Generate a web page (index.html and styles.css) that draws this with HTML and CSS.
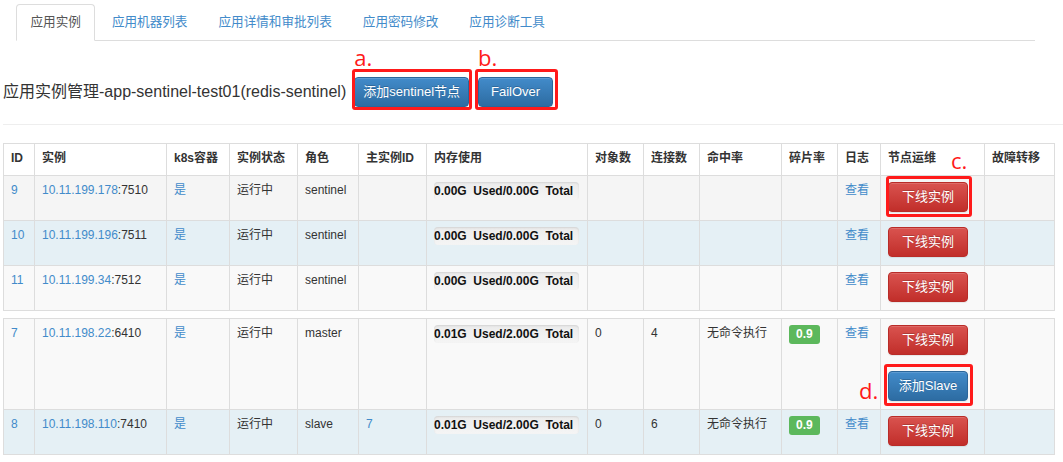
FILE: index.html
```html
<!DOCTYPE html>
<html lang="zh-CN">
<head>
<meta charset="utf-8">
<title>应用实例</title>
<link rel="stylesheet" href="styles.css">
</head>
<body>
<ul class="tabs">
  <li><a class="tab active">应用实例</a></li>
  <li><a class="tab">应用机器列表</a></li>
  <li><a class="tab">应用详情和审批列表</a></li>
  <li><a class="tab">应用密码修改</a></li>
  <li><a class="tab">应用诊断工具</a></li>
</ul>

<div class="page-head">
  <h3 class="title">应用实例管理-app-sentinel-test01(redis-sentinel)</h3>
  <span class="annot">
    <button class="btn btn-primary btn-sentinel">添加sentinel节点</button>
    <span class="mark-box box-a"></span>
    <span class="mark-label label-a">a.</span>
  </span>
  <span class="annot annot-b">
    <button class="btn btn-primary btn-failover">FailOver</button>
    <span class="mark-box box-b"></span>
    <span class="mark-label label-b">b.</span>
  </span>
</div>

<table class="grid">
  <colgroup>
    <col class="c-id"><col class="c-inst"><col class="c-k8s"><col class="c-state"><col class="c-role"><col class="c-master"><col class="c-mem"><col class="c-obj"><col class="c-conn"><col class="c-hit"><col class="c-frag"><col class="c-log"><col class="c-ops"><col class="c-fail">
  </colgroup>
  <thead>
    <tr>
      <th>ID</th><th>实例</th><th>k8s容器</th><th>实例状态</th><th>角色</th><th>主实例ID</th><th>内存使用</th><th>对象数</th><th>连接数</th><th>命中率</th><th>碎片率</th><th>日志</th><th>节点运维</th><th>故障转移</th>
    </tr>
  </thead>
  <tbody>
    <tr class="row-hover">
      <td><a>9</a></td>
      <td><a>10.11.199.178</a>:7510</td>
      <td><a>是</a></td>
      <td>运行中</td>
      <td>sentinel</td>
      <td></td>
      <td><span class="mem">0.00G&nbsp; Used/0.00G&nbsp; Total</span></td>
      <td></td><td></td><td></td><td></td>
      <td><a>查看</a></td>
      <td>
        <span class="annot">
          <button class="btn btn-danger btn-cell">下线实例</button>
          <span class="mark-box box-c"></span>
          <span class="mark-label label-c">c.</span>
        </span>
      </td>
      <td></td>
    </tr>
    <tr class="row-info">
      <td><a>10</a></td>
      <td><a>10.11.199.196</a>:7511</td>
      <td><a>是</a></td>
      <td>运行中</td>
      <td>sentinel</td>
      <td></td>
      <td><span class="mem">0.00G&nbsp; Used/0.00G&nbsp; Total</span></td>
      <td></td><td></td><td></td><td></td>
      <td><a>查看</a></td>
      <td><button class="btn btn-danger btn-cell">下线实例</button></td>
      <td></td>
    </tr>
    <tr class="row-plain">
      <td><a>11</a></td>
      <td><a>10.11.199.34</a>:7512</td>
      <td><a>是</a></td>
      <td>运行中</td>
      <td>sentinel</td>
      <td></td>
      <td><span class="mem">0.00G&nbsp; Used/0.00G&nbsp; Total</span></td>
      <td></td><td></td><td></td><td></td>
      <td><a>查看</a></td>
      <td><button class="btn btn-danger btn-cell">下线实例</button></td>
      <td></td>
    </tr>
  </tbody>
</table>

<table class="grid grid-second">
  <colgroup>
    <col class="c-id"><col class="c-inst"><col class="c-k8s"><col class="c-state"><col class="c-role"><col class="c-master"><col class="c-mem"><col class="c-obj"><col class="c-conn"><col class="c-hit"><col class="c-frag"><col class="c-log"><col class="c-ops"><col class="c-fail">
  </colgroup>
  <tbody>
    <tr class="row-plain">
      <td><a>7</a></td>
      <td><a>10.11.198.22</a>:6410</td>
      <td><a>是</a></td>
      <td>运行中</td>
      <td>master</td>
      <td></td>
      <td><span class="mem">0.01G&nbsp; Used/2.00G&nbsp; Total</span></td>
      <td>0</td>
      <td>4</td>
      <td>无命令执行</td>
      <td><span class="label-ok">0.9</span></td>
      <td><a>查看</a></td>
      <td>
        <div class="btn-stack">
          <button class="btn btn-danger btn-cell">下线实例</button>
          <span class="annot">
            <button class="btn btn-primary btn-cell">添加Slave</button>
            <span class="mark-box box-d"></span>
            <span class="mark-label label-d">d.</span>
          </span>
        </div>
      </td>
      <td></td>
    </tr>
    <tr class="row-info">
      <td><a>8</a></td>
      <td><a>10.11.198.110</a>:7410</td>
      <td><a>是</a></td>
      <td>运行中</td>
      <td>slave</td>
      <td><a>7</a></td>
      <td><span class="mem">0.01G&nbsp; Used/2.00G&nbsp; Total</span></td>
      <td>0</td>
      <td>6</td>
      <td>无命令执行</td>
      <td><span class="label-ok">0.9</span></td>
      <td><a>查看</a></td>
      <td><button class="btn btn-danger btn-cell">下线实例</button></td>
      <td></td>
    </tr>
  </tbody>
</table>
</body>
</html>
```

FILE: styles.css
```css
* { box-sizing: border-box; }

body {
  margin: 0;
  background: #fff;
  color: #333;
  font-family: "Liberation Sans", Arial, "Noto Sans CJK SC", sans-serif;
  font-size: 12px;
}

a { color: #428bca; text-decoration: none; cursor: pointer; }

/* ---------- tabs ---------- */
.tabs {
  display: flex;
  list-style: none;
  margin: 4px 28px 0 16px;
  padding: 0;
  border-bottom: 1px solid #ddd;
}
.tabs li { margin: 0 2px -1px 0; }
.tab {
  display: block;
  padding: 10px 13.5px;
  font-size: 12.6px;
  line-height: 15px;
  color: #428bca;
  border: 1px solid transparent;
  border-radius: 4px 4px 0 0;
}
.tab.active {
  color: #555;
  background: #fff;
  border-color: #ddd #ddd transparent;
}

/* ---------- page head ---------- */
.page-head {
  display: flex;
  align-items: center;
  gap: 8px;
  margin: 36px 0 0 3px;
  padding-bottom: 17px;
  border-bottom: 1px solid #eee;
}
.title {
  margin: 0;
  font-size: 16px;
  line-height: 30px;
  font-weight: normal;
  color: #333;
}
.annot-b { margin-left: 1px; }

/* ---------- buttons ---------- */
.btn {
  display: inline-block;
  height: 30px;
  padding: 5px 8px;
  font-family: "Liberation Sans", Arial, "Noto Sans CJK SC", sans-serif;
  font-size: 13px;
  line-height: 18px;
  color: #fff;
  text-align: center;
  white-space: nowrap;
  border: 1px solid transparent;
  border-radius: 4px;
  text-shadow: 0 -1px 0 rgba(0, 0, 0, .2);
  box-shadow: inset 0 1px 0 rgba(255, 255, 255, .15), 0 1px 1px rgba(0, 0, 0, .075);
  cursor: pointer;
}
.btn-primary {
  background: linear-gradient(to bottom, #428bca 0, #2d6ca2 100%);
  border-color: #2b669a;
}
.btn-danger {
  background: linear-gradient(to bottom, #d9534f 0, #c12e2a 100%);
  border-color: #b92c28;
}
.btn-failover { padding: 5px 12px; }
.btn-cell { display: block; width: 80px; padding: 5px 0; }

/* ---------- annotations (overlay) ---------- */
.annot { position: relative; display: inline-block; vertical-align: top; }
.mark-box {
  position: absolute;
  border: 3px solid #ff1a1a;
  border-radius: 3px;
  pointer-events: none;
}
.mark-label {
  position: absolute;
  font-family: "Open Sans", "Liberation Sans", Arial, sans-serif;
  font-size: 22px;
  line-height: 22px;
  color: #ff1a1a;
  white-space: nowrap;
}
.box-a { left: -2px; right: -3px; top: -8px; bottom: -3px; }
.label-a { left: 0; top: -31px; }
.box-b { left: -3px; right: -5px; top: -8px; bottom: -3px; }
.label-b { left: 0; top: -31px; }
.box-c { left: -2px; right: -4px; top: -6px; bottom: -5px; }
.label-c { left: 63px; top: -33px; }
.box-d { left: -4px; right: -5px; top: -7px; bottom: -5px; }
.label-d { left: -29px; top: 8px; }

/* ---------- table ---------- */
.grid {
  border-collapse: collapse;
  table-layout: fixed;
  width: 1052px;
  margin: 18px 0 0 3px;
}
.grid-second { margin-top: 7px; }
.grid th,
.grid td {
  border: 1px solid #ddd;
  padding: 6px 7px 8px;
  vertical-align: top;
  text-align: left;
  font-size: 12px;
  line-height: 17px;
  white-space: nowrap;
}
.grid th { font-weight: bold; background: #fff; color: #333; }

.c-id { width: 31px; }
.c-inst { width: 132px; }
.c-k8s { width: 63px; }
.c-state { width: 68px; }
.c-role { width: 61px; }
.c-master { width: 68px; }
.c-mem { width: 161px; }
.c-obj { width: 56px; }
.c-conn { width: 56px; }
.c-hit { width: 82px; }
.c-frag { width: 56px; }
.c-log { width: 43px; }
.c-ops { width: 104px; }
.c-fail { width: 70px; }

.row-hover td { background: #f5f5f5; }
.row-info td { background: #e5f0f5; }
.row-plain td { background: #f9f9f9; }

.mem {
  display: block;
  width: 145px;
  height: 18px;
  line-height: 18px;
  font-weight: bold;
  color: #111;
  border-radius: 4px;
  background: linear-gradient(to bottom, #ebebeb 0, #f5f5f5 100%);
  box-shadow: inset 0 1px 2px rgba(0, 0, 0, .1);
}

.label-ok {
  display: inline-block;
  vertical-align: top;
  padding: 3px 7px 4px;
  font-size: 12px;
  line-height: 12px;
  font-weight: bold;
  color: #fff;
  background: #5cb85c;
  border-radius: 3px;
}

.btn-stack {
  display: flex;
  flex-direction: column;
  align-items: flex-start;
  gap: 16px;
}
```
